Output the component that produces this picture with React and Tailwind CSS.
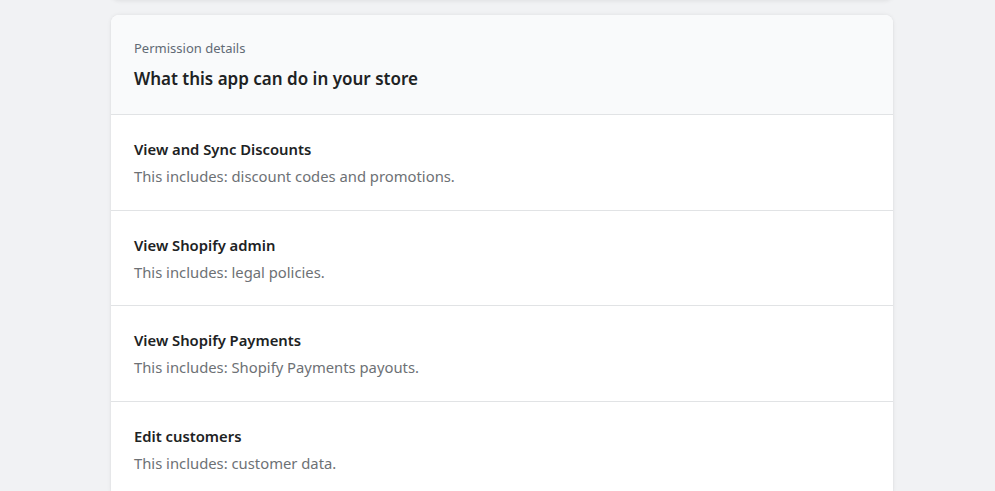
export default function App() {
  const rows = [
    ["View and Sync Discounts", "This includes: discount codes and promotions.", "h-[96px]"],
    ["View Shopify admin", "This includes: legal policies.", "h-[95px]"],
    ["View Shopify Payments", "This includes: Shopify Payments payouts.", "h-[96px]"],
    ["Edit customers", "This includes: customer data.", "h-[96px]"],
  ];
  return (
    <div className="w-[995px] h-[491px] overflow-hidden bg-[#f1f2f4]" style={{ fontFamily: '"Segoe UI", "Noto Sans", sans-serif' }}>
      <div className="w-[782px] ml-[111px] h-[12px] -mt-[12px] rounded-b-lg bg-white shadow-[0_1px_4px_rgba(0,0,0,0.08)]" />
      <div className="w-[782px] ml-[111px] mt-[15px] rounded-lg bg-white shadow-[0_0_4px_rgba(0,0,0,0.08),0_1px_2px_rgba(0,0,0,0.06)] overflow-hidden">
        <div className="bg-[#f9fafb] border-b border-[#e1e3e5] h-[100px] px-[23px] pt-[24px]">
          <div className="text-[13px] leading-[18px] text-[#616a75]">Permission details</div>
          <div className="mt-[10px] text-[17px] leading-[24px] font-semibold text-[#202223]">What this app can do in your store</div>
        </div>
        {rows.map(([t, d, h], i) => (
          <div key={i} className={`${h} px-[23px] pt-[24px] ${i < rows.length - 1 ? "border-b border-[#e1e3e5]" : ""}`}>
            <div className="text-[14.8px] leading-[20px] font-semibold text-[#202223]">{t}</div>
            <div className="mt-[7px] text-[14.8px] leading-[20px] text-[#6d7175]">{d}</div>
          </div>
        ))}
      </div>
    </div>
  );
}
